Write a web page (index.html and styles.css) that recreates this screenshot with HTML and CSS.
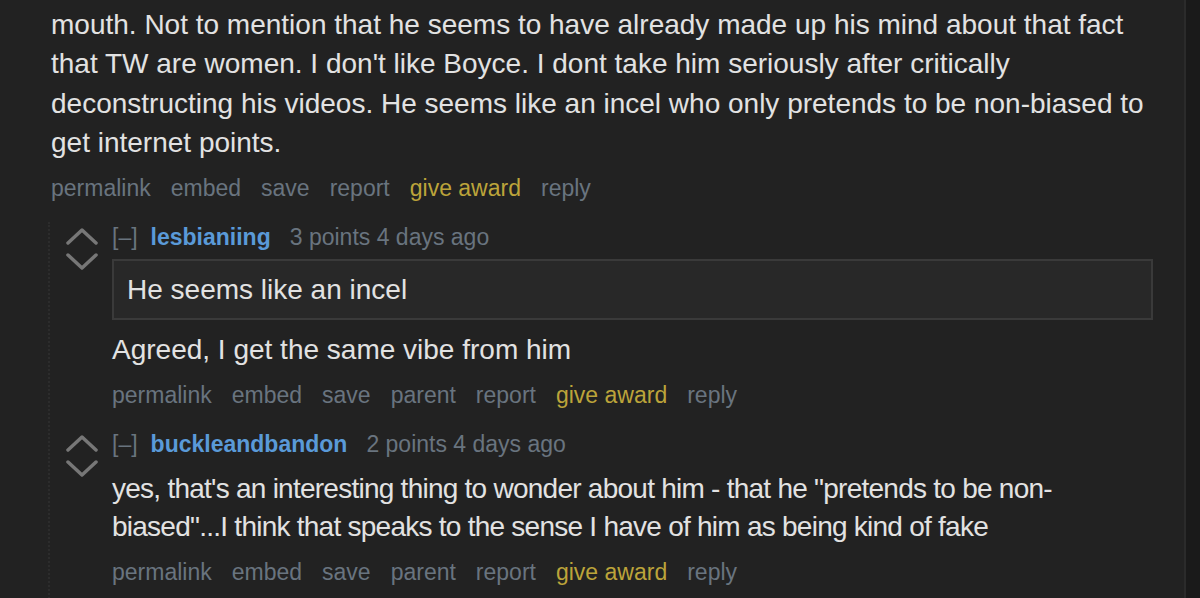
FILE: index.html
```html
<!DOCTYPE html>
<html>
<head>
<meta charset="utf-8">
<link rel="stylesheet" href="styles.css">
</head>
<body>
<div class="page">
  <div class="main">
    <div class="parent">
      <div class="md">
        <p>mouth. Not to mention that he seems to have already made up his mind about that fact that TW are women. I don't like Boyce. I dont take him seriously after critically deconstructing his videos. He seems like an incel who only pretends to be non-biased to get internet points.</p>
      </div>
      <ul class="buttons">
        <li>permalink</li><li>embed</li><li>save</li><li>report</li><li class="award">give award</li><li>reply</li>
      </ul>
      <div class="children">
        <div class="comment">
          <div class="votes">
            <svg class="arrow" viewBox="0 0 32 18" width="32" height="18"><path d="M2 16 L16 3 L30 16" fill="none" stroke="#777777" stroke-width="3.5" stroke-linecap="round" stroke-linejoin="round"/></svg>
            <svg class="arrow" viewBox="0 0 32 18" width="32" height="18"><path d="M2 2 L16 15 L30 2" fill="none" stroke="#777777" stroke-width="3.5" stroke-linecap="round" stroke-linejoin="round"/></svg>
          </div>
          <div class="entry">
            <div class="tagline"><span class="expand">[–]</span><span class="author">lesbianiing</span><span class="score">3 points 4 days ago</span></div>
            <div class="md">
              <blockquote>He seems like an incel</blockquote>
              <p>Agreed, I get the same vibe from him</p>
            </div>
            <ul class="buttons">
              <li>permalink</li><li>embed</li><li>save</li><li>parent</li><li>report</li><li class="award">give award</li><li>reply</li>
            </ul>
          </div>
        </div>
        <div class="comment">
          <div class="votes">
            <svg class="arrow" viewBox="0 0 32 18" width="32" height="18"><path d="M2 16 L16 3 L30 16" fill="none" stroke="#777777" stroke-width="3.5" stroke-linecap="round" stroke-linejoin="round"/></svg>
            <svg class="arrow" viewBox="0 0 32 18" width="32" height="18"><path d="M2 2 L16 15 L30 2" fill="none" stroke="#777777" stroke-width="3.5" stroke-linecap="round" stroke-linejoin="round"/></svg>
          </div>
          <div class="entry">
            <div class="tagline"><span class="expand">[–]</span><span class="author">buckleandbandon</span><span class="score">2 points 4 days ago</span></div>
            <div class="md">
              <p class="tight">yes, that's an interesting thing to wonder about him - that he "pretends to be non-biased"...I think that speaks to the sense I have of him as being kind of fake</p>
            </div>
            <ul class="buttons">
              <li>permalink</li><li>embed</li><li>save</li><li>parent</li><li>report</li><li class="award">give award</li><li>reply</li>
            </ul>
          </div>
        </div>
      </div>
    </div>
  </div>
  <div class="side"></div>
</div>
</body>
</html>
```

FILE: styles.css
```css
html, body {
  margin: 0;
  padding: 0;
  background: #222222;
  height: 598px;
  overflow: hidden;
}
body {
  font-family: "Liberation Sans", Arial, sans-serif;
  color: #e2e2e2;
}
.page {
  display: flex;
  height: 598px;
}
.main {
  width: 1184px;
  border-right: 2px solid #2b2b2b;
}
.side {
  flex: 1;
  background: #1a1a1a;
}
.parent {
  padding-left: 51px;
  padding-top: 5px;
  height: 100%;
  box-sizing: border-box;
  display: flex;
  flex-direction: column;
}
.md p {
  margin: 0;
  font-size: 28px;
  line-height: 39.3px;
}
.parent > .md {
  width: 1120px;
}
.buttons {
  list-style: none;
  margin: 0;
  padding: 0;
  display: flex;
  gap: 20px;
  font-size: 23px;
  line-height: 30px;
  color: #69747f;
}
.parent > .buttons {
  margin-top: 11px;
}
.buttons .award {
  color: #bca43a;
}
.children {
  flex: 1;
  margin-left: -3px;
  border-left: 2px dotted #2c2c2c;
  padding-left: 16px;
  margin-top: 19px;
}
.comment {
  display: flex;
  gap: 12px;
  margin-bottom: 19px;
}
.votes {
  display: flex;
  flex-direction: column;
  gap: 8px;
  padding-top: 5px;
  width: 34px;
}
.arrow {
  display: block;
}
.entry {
  width: 1041px;
}
.tagline {
  font-size: 23px;
  line-height: 30px;
  color: #69747f;
  display: flex;
}
.expand {
  margin-right: 13px;
}
.author {
  color: #5a9ad8;
  font-weight: bold;
  margin-right: 19px;
}
.entry .md p {
  margin-top: 11px;
  line-height: 38.5px;
}
.entry .md p.tight {
  letter-spacing: -0.75px;
}
blockquote {
  margin: 7px 0 0 0;
  border: 2px solid #3a3a3a;
  background: #282828;
  padding: 0 13px;
  font-size: 28px;
  line-height: 57px;
  color: #e2e2e2;
}
.entry blockquote + p {
  margin-top: 13px;
}
.entry .buttons {
  margin-top: 10px;
}
```
